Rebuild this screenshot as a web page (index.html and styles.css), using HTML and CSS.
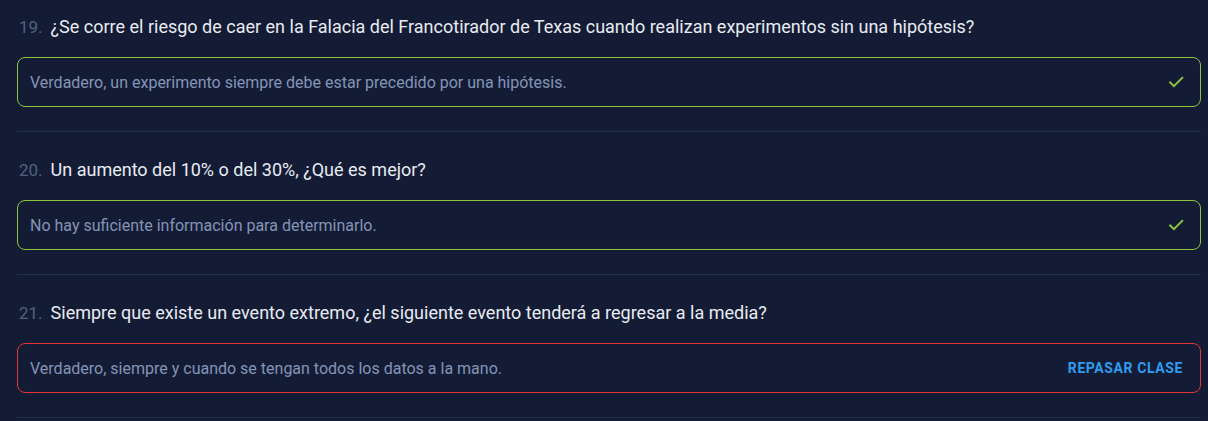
FILE: index.html
```html
<!DOCTYPE html>
<html lang="es">
<head>
<meta charset="utf-8">
<title>Resultados</title>
<link rel="stylesheet" href="styles.css">
</head>
<body>
<div class="list">
  <section class="item">
    <div class="question"><span class="num">19.</span><span class="text">¿Se corre el riesgo de caer en la Falacia del Francotirador de Texas cuando realizan experimentos sin una hipótesis?</span></div>
    <div class="answer correct">
      <span class="answer-text">Verdadero, un experimento siempre debe estar precedido por una hipótesis.</span>
      <svg class="check" viewBox="0 0 24 24" width="20" height="20"><path d="M5 12.5l4.5 4.5L19.5 7" fill="none" stroke="#8cc63f" stroke-width="2.4" stroke-linecap="square"/></svg>
    </div>
  </section>
  <section class="item">
    <div class="question"><span class="num">20.</span><span class="text">Un aumento del 10% o del 30%, ¿Qué es mejor?</span></div>
    <div class="answer correct">
      <span class="answer-text">No hay suficiente información para determinarlo.</span>
      <svg class="check" viewBox="0 0 24 24" width="20" height="20"><path d="M5 12.5l4.5 4.5L19.5 7" fill="none" stroke="#8cc63f" stroke-width="2.4" stroke-linecap="square"/></svg>
    </div>
  </section>
  <section class="item">
    <div class="question"><span class="num">21.</span><span class="text">Siempre que existe un evento extremo, ¿el siguiente evento tenderá a regresar a la media?</span></div>
    <div class="answer wrong">
      <span class="answer-text">Verdadero, siempre y cuando se tengan todos los datos a la mano.</span>
      <a class="review" href="#">Repasar clase</a>
    </div>
  </section>
</div>
</body>
</html>
```

FILE: styles.css
```css
html, body {
  margin: 0;
  padding: 0;
  background: #141c35;
}
body {
  font-family: Roboto, "Liberation Sans", Arial, sans-serif;
  overflow: hidden;
}
.list {
  padding: 0 7px 0 17px;
}
.item {
  padding: 26px 0 24px;
  border-bottom: 1px solid #243150;
}
.item:first-child {
  padding-top: 15px;
}
.question {
  display: flex;
  align-items: baseline;
  gap: 8px;
  height: 24px;
  line-height: 24px;
  margin-bottom: 18px;
  padding-left: 2px;
}
.num {
  color: #50627f;
  font-size: 17px;
}
.text {
  color: #e8ebf2;
  font-size: 18px;
}
.answer {
  display: flex;
  align-items: center;
  justify-content: space-between;
  height: 50px;
  box-sizing: border-box;
  border: 1px solid #8cc63f;
  border-radius: 8px;
  padding: 0 17px 0 12px;
}
.answer.wrong {
  border-color: #e5343a;
}
.answer-text {
  color: #8494b5;
  font-size: 16px;
}
.check {
  display: block;
  margin-right: -3px;
}
.review {
  color: #2e9bf0;
  font-size: 14px;
  font-weight: 700;
  text-transform: uppercase;
  letter-spacing: 0.6px;
  text-decoration: none;
}
```
